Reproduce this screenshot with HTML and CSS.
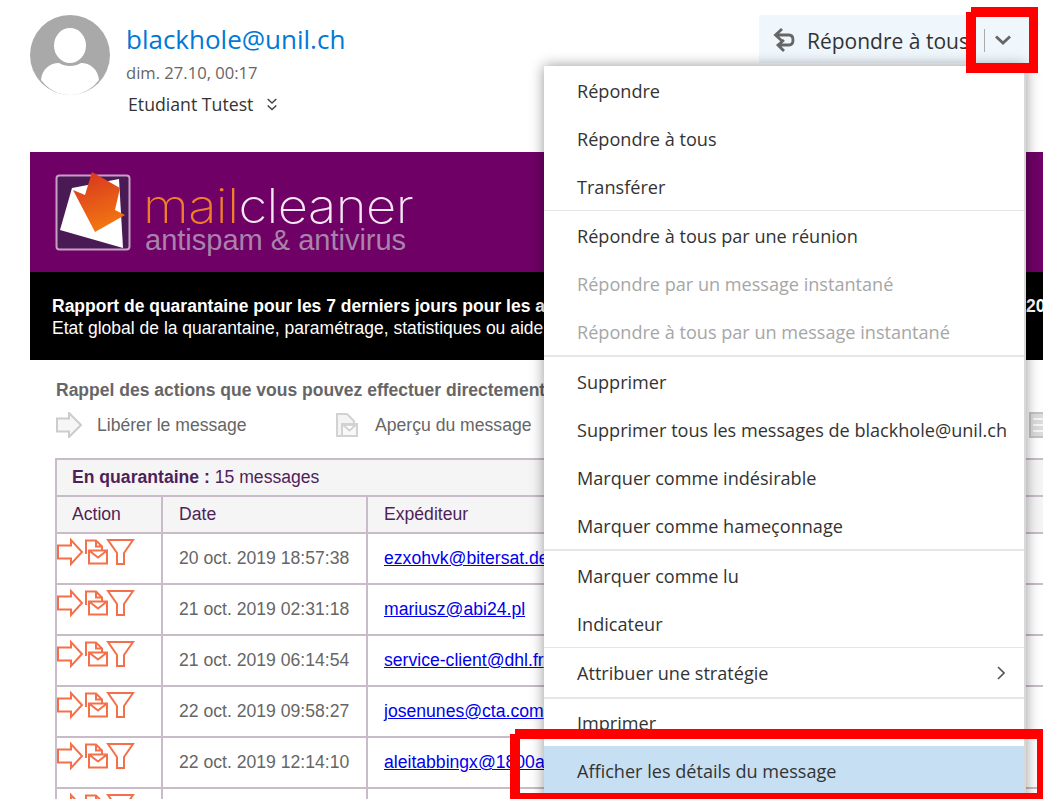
FILE: index.html
```html
<!DOCTYPE html>
<html lang="fr">
<head>
<meta charset="utf-8">
<title>Message</title>
<link rel="stylesheet" href="styles.css">
</head>
<body>
<div class="page">
  <header class="head">
    <svg class="avatar" viewBox="0 0 80 80"><circle cx="40" cy="40" r="40" fill="#a9a9a9"/><ellipse cx="40" cy="30.500" rx="16" ry="17.500" fill="#fff"/><path d="M11 65c1-11 9-17 18-17 3 2 7 3 11 3s8-1 11-3c9 0 17 6 18 17-7 9-17 15-29 15S18 74 11 65z" fill="#fff"/></svg>
    <div class="who">
      <div class="from">blackhole@unil.ch</div>
      <div class="when">dim. 27.10, 00:17</div>
      <div class="to">Etudiant Tutest <svg class="dbl" viewBox="0 0 10 13"><path d="M.7 1 5 5l4.300-4M.7 7.500 5 11.500l4.300-4" fill="none" stroke="#444" stroke-width="1.500"/></svg></div>
    </div>
    <div class="reply">
      <svg class="reply-ico" viewBox="0 0 22 24"><path d="M9 1 2.500 7 9 13M2.500 7H16c2.500 0 4 1.800 4 5s-1.500 5-4 5H5M11 12l-6 5 6 6" fill="none" stroke="#666" stroke-width="2.800"/></svg>
      <span class="reply-txt">Répondre à tous</span>
      <span class="reply-sep"></span>
      <svg class="reply-chev" viewBox="0 0 16 10"><path d="M1 1.500 8 8l7-6.500" fill="none" stroke="#666" stroke-width="2.800"/></svg>
    </div>
  </header>

  <article class="mail">
    <div class="brand">
      <svg class="logo" viewBox="0 0 78 82">
        <defs><linearGradient id="ar" x1="0.300" y1="0" x2="0.600" y2="1"><stop offset="0" stop-color="#d8371f"/><stop offset="1" stop-color="#f47a10"/></linearGradient></defs>
        <rect x="1.500" y="5.500" width="73" height="74" rx="3" fill="#4a1a55" stroke="#c79fc5" stroke-width="2"/>
        <path d="M17 18 64 9 68 78 5 60z" fill="#fff"/>
        <path d="M37 2 65 18 60 40 70 45 40 62 18 20 30 25z" fill="url(#ar)"/>
      </svg>
      <div class="wordmark">
        <div class="wm-top"><span class="wm-mail">mail</span>cleaner</div>
        <div class="wm-sub">antispam &amp; antivirus</div>
      </div>
    </div>
    <div class="band">
      <div class="band-1"><span class="b-main">Rapport de quarantaine pour les 7 derniers jours pour les adresses de blackhole@unil.ch au 27 oct.</span><span>2019</span></div>
      <div class="band-2">Etat global de la quarantaine, paramétrage, statistiques ou aide en ligne</div>
    </div>
    <div class="body">
      <div class="remind">Rappel des actions que vous pouvez effectuer directement</div>
      <div class="legend">
        <span class="leg"><svg class="lg-arrow" viewBox="0 0 26 26"><path d="M1 6.500h12V1l12 12-12 12v-5.500H1z" fill="#f6f6f6" stroke="#ccc" stroke-width="2"/></svg>Libérer le message</span>
        <span class="leg"><svg class="lg-mail" viewBox="0 0 24 24"><path d="M2 23V1h10l7 7v4H7v11z" fill="#f4f4f4" stroke="#d2d2d2" stroke-width="2"/><path d="M7 11h15v12H7zM7 11l7.500 6.500L22 11" fill="#f8f8f8" stroke="#d2d2d2" stroke-width="2"/></svg>Aperçu du message</span>
        <span class="leg leg-far"><svg class="lg-doc" viewBox="0 0 26 26"><rect x="1" y="1" width="24" height="24" fill="#dcdcdc" stroke="#c4c4c4" stroke-width="2"/><path d="M4 7h18M4 13h12M4 19h12" stroke="#f6f6f6" stroke-width="2"/></svg></span>
      </div>
      <table class="qt">
        <colgroup><col class="c1"><col class="c2"><col class="c3"><col></colgroup>
        <thead>
          <tr><th class="cap" colspan="4"><b>En quarantaine :</b> 15 messages</th></tr>
          <tr class="hd"><th class="first">Action</th><th>Date</th><th>Expéditeur</th><th></th></tr>
        </thead>
        <tbody>
          <tr>
            <td class="acts"><svg class="act" viewBox="0 0 80 30"><use href="#acts"/></svg></td>
            <td class="dt">20 oct. 2019 18:57:38</td><td><a href="#">ezxohvk@bitersat.de</a></td><td></td>
          </tr>
          <tr>
            <td class="acts"><svg class="act" viewBox="0 0 80 30"><use href="#acts"/></svg></td>
            <td class="dt">21 oct. 2019 02:31:18</td><td><a href="#">mariusz@abi24.pl</a></td><td></td>
          </tr>
          <tr>
            <td class="acts"><svg class="act" viewBox="0 0 80 30"><use href="#acts"/></svg></td>
            <td class="dt">21 oct. 2019 06:14:54</td><td><a href="#">service-client@dhl.fr</a></td><td></td>
          </tr>
          <tr>
            <td class="acts"><svg class="act" viewBox="0 0 80 30"><use href="#acts"/></svg></td>
            <td class="dt">22 oct. 2019 09:58:27</td><td><a href="#">josenunes@cta.com</a></td><td></td>
          </tr>
          <tr>
            <td class="acts"><svg class="act" viewBox="0 0 80 30"><use href="#acts"/></svg></td>
            <td class="dt">22 oct. 2019 12:14:10</td><td><a href="#">aleitabbingx@1800a.com</a></td><td></td>
          </tr>
          <tr>
            <td class="acts"><svg class="act" viewBox="0 0 80 30"><use href="#acts"/></svg></td>
            <td class="dt"></td><td></td><td></td>
          </tr>
        </tbody>
      </table>
    </div>
  </article>

  <svg class="defs" width="0" height="0"><defs>
    <g id="acts" fill="none" stroke="#f4704a" stroke-width="2">
      <path d="M1 8.500h13V3l11 12-11 12v-5.500H1z"/>
      <path d="M29 17V3.500h10l6 6v4M39 3.500v6h6"/>
      <path d="M32 13.500h18v13H32zM32 13.500l9 7 9-7"/>
      <path d="M51 3h25L67 16v11h-7V16z"/>
    </g>
  </defs></svg>

  <nav class="menu">
    <div class="grp g-thin">
      <div class="mi">Répondre</div>
      <div class="mi">Répondre à tous</div>
      <div class="mi">Transférer</div>
    </div>
    <div class="grp">
      <div class="mi">Répondre à tous par une réunion</div>
      <div class="mi off">Répondre par un message instantané</div>
      <div class="mi off">Répondre à tous par un message instantané</div>
    </div>
    <div class="grp">
      <div class="mi">Supprimer</div>
      <div class="mi">Supprimer tous les messages de blackhole@unil.ch</div>
      <div class="mi">Marquer comme indésirable</div>
      <div class="mi">Marquer comme hameçonnage</div>
    </div>
    <div class="grp g-thin">
      <div class="mi">Marquer comme lu</div>
      <div class="mi">Indicateur</div>
    </div>
    <div class="grp g-flush">
      <div class="mi has-sub">Attribuer une stratégie<svg class="sub" viewBox="0 0 8 14"><path d="M1 1l6 6-6 6" fill="none" stroke="#555" stroke-width="1.600"/></svg></div>
    </div>
    <div class="grp g-flush">
      <div class="mi">Imprimer</div>
      <div class="mi hi">Afficher les détails du message</div>
    </div>
  </nav>

  <div class="mark mark-top"></div>
  <div class="mark mark-bot"></div>
</div>
</body>
</html>
```
FILE: styles.css
```css
* { box-sizing: border-box; }
html, body { margin: 0; padding: 0; background: #fff; }
body { overflow: hidden; }
.page { position: relative; width: 1043px; height: 799px; overflow: hidden; font-family: "Open Sans", sans-serif; color: #333; }
.defs { position: absolute; }

.head { display: flex; height: 152px; padding: 15px 0 0 30px; }
.avatar { width: 80px; height: 80px; flex: none; }
.who { margin-left: 16px; width: 633px; flex: none; }
.from { font-size: 26px; line-height: 34px; margin-top: 7px; color: #0078d7; }
.when { font-size: 16.600px; line-height: 22px; margin-top: 6px; color: #666; }
.to { font-size: 17.700px; line-height: 24px; margin: 8px 0 0 2px; color: #333; display: flex; align-items: center; }
.dbl { width: 10px; height: 13px; margin-left: 14px; }
.reply { flex: none; width: 271px; height: 48px; background: #eff6fc; display: flex; align-items: center; padding: 2px 0 0 14px; }
.reply-ico { width: 22px; height: 24px; flex: none; }
.reply-txt { font-size: 21px; line-height: 28px; margin: 2px 0 0 12px; width: 177px; white-space: nowrap; color: #333; }
.reply-sep { width: 1px; height: 23px; background: #aaa; flex: none; }
.reply-chev { width: 16px; height: 10px; margin-left: 10px; flex: none; }

.mail { margin-left: 30px; width: 1100px; font-family: "Liberation Sans", Arial, sans-serif; }
.brand { height: 120px; background: #6f0066; display: flex; padding: 18px 0 0 25px; }
.logo { width: 78px; height: 82px; flex: none; }
.wordmark { margin-left: 12px; color: #f5e8f3; }
.wm-top { font-family: "Inter", sans-serif; font-weight: 250; font-size: 48px; line-height: 36px; margin: 18px 0 0 -2px; letter-spacing: -0.500px; white-space: nowrap; transform: scaleX(1.095); transform-origin: left center; }
.wm-mail { color: #ef7d2a; }
.wm-sub { font-size: 29px; line-height: 28px; margin-top: 2px; color: #a983aa; white-space: nowrap; }
.band { height: 88px; background: #000; color: #fff; padding: 23px 0 0 22px; white-space: nowrap; font-size: 17.500px; line-height: 22px; }
.band-1 { font-weight: 700; display: flex; }
.b-main { width: 974px; flex: none; overflow: hidden; }
.body { padding: 20px 0 0 26px; }
.remind { font-weight: 700; font-size: 17.500px; line-height: 20px; color: #666; white-space: nowrap; }
.legend { display: flex; height: 58px; padding-top: 12px; color: #666; font-size: 17.600px; line-height: 26px; white-space: nowrap; }
.leg { display: flex; align-items: center; height: 26px; width: 279px; flex: none; }
.leg-far { margin-left: 415px; }
.lg-arrow { width: 26px; height: 26px; margin-right: 15px; flex: none; }
.lg-mail { width: 24px; height: 24px; margin-right: 16px; flex: none; }
.lg-doc { width: 26px; height: 26px; flex: none; }

.qt { border-collapse: collapse; table-layout: fixed; width: 1100px; margin-left: -1px; font-size: 17.600px; color: #666; }
.qt th, .qt td { border: 2px solid #c9bcc8; padding: 0 0 0 16px; text-align: left; font-weight: 400; white-space: nowrap; overflow: hidden; }
.c1 { width: 106px; }
.c2 { width: 205px; }
.c3 { width: 300px; }
.qt th { background: #f5f5f5; color: #4f1f59; height: 37px; }
.qt .cap, .qt .first { padding-left: 15px; }
.cap b { font-weight: 700; }
.qt td { height: 51px; }
.qt .acts { padding: 3px 0 0 0; vertical-align: top; line-height: 0; }
.act { width: 80px; height: 30px; }
.qt a { color: #00e; text-decoration: underline; }

.menu { position: absolute; left: 544px; top: 66px; width: 482px; height: 760px; background: #fff; border-right: 2px solid #d8d8d8; box-shadow: 0 0 13px rgba(0,0,0,.42); padding-top: 1px; font-size: 18.100px; color: #333; }
.grp { border-bottom: 2px solid #e6e6e6; margin-bottom: 1px; }
.grp .mi:last-child { margin-bottom: -1px; }
.g-thin { border-bottom-width: 1px; }
.g-flush { margin-bottom: 0; }
.g-flush .mi:last-child { margin-bottom: 0; }
.grp:last-child { border-bottom: 0; }
.mi { height: 48px; line-height: 48px; padding-left: 33px; white-space: nowrap; }
.off { color: #a6a6a6; }
.has-sub { display: flex; align-items: center; justify-content: space-between; padding-right: 19px; }
.sub { width: 8px; height: 14px; }
.g-flush .hi { background: #c7dff3; margin-top: -1px; height: 49px; line-height: 50px; }

.mark { position: absolute; border: 10px solid #f00; clip-path: polygon(5px 0, 100% 0, 100% 100%, 0 100%, 0 5px, 5px 5px); }
.mark-top { left: 966px; top: 7px; width: 72px; height: 66px; border-right-width: 9px; }
.mark-bot { left: 510px; top: 729px; width: 533px; height: 70px; border-right-width: 6px; border-bottom-width: 6px; }
```
